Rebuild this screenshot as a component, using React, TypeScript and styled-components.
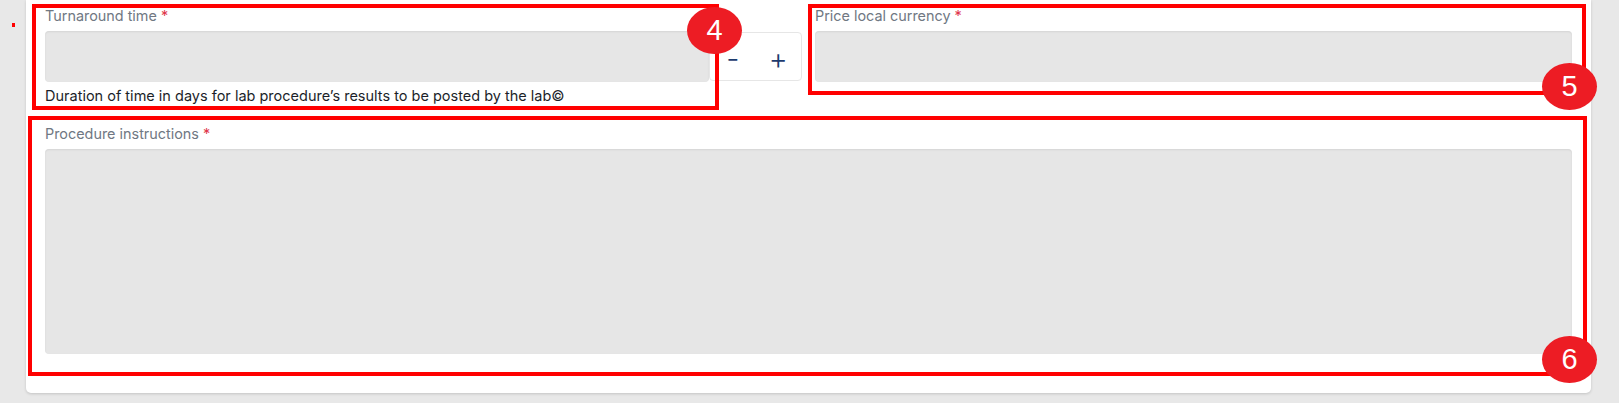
import React from "react"
import styled, { createGlobalStyle } from "styled-components"

const GlobalStyle = createGlobalStyle`
  * {
    box-sizing: border-box;
  }
  body {
    margin: 0;
    background: #e8e8e8;
    font-family: Inter, "Liberation Sans", Arial, sans-serif;
  }
`

interface Rect {
  left: number
  top: number
  width: number
  height: number
}

const annotations: { n: number; box: Rect; badge: { left: number; top: number } }[] = [
  { n: 4, box: { left: 6, top: 4, width: 687, height: 106 }, badge: { left: 661, top: 7 } },
  { n: 5, box: { left: 782, top: 4, width: 778, height: 91 }, badge: { left: 1516, top: 63 } },
  { n: 6, box: { left: 2, top: 116, width: 1559, height: 260 }, badge: { left: 1516, top: 336 } },
]

function App() {
  return (
    <>
      <GlobalStyle />
      <Page>
        <Dot />
        <Card>
          <TopRow>
            <Field>
              <Label>
                Turnaround time <Req>*</Req>
              </Label>
              <InputGroup>
                <Input />
                <Stepper>
                  <StepButton>-</StepButton>
                  <StepButton>+</StepButton>
                </Stepper>
              </InputGroup>
              <Helper>Duration of time in days for lab procedure’s results to be posted by the lab©</Helper>
            </Field>
            <Field>
              <Label>
                Price local currency <Req>*</Req>
              </Label>
              <Input />
            </Field>
          </TopRow>
          <Field>
            <Label>
              Procedure instructions <Req>*</Req>
            </Label>
            <TextArea />
          </Field>

          {annotations.map((a) => (
            <React.Fragment key={a.n}>
              <Outline
                style={{ left: a.box.left, top: a.box.top, width: a.box.width, height: a.box.height }}
              />
              <Badge style={{ left: a.badge.left, top: a.badge.top }}>{a.n}</Badge>
            </React.Fragment>
          ))}
        </Card>
      </Page>
    </>
  )
}

const Page = styled.div`
  display: flex;
  align-items: flex-start;
  padding: 0 28px 10px 12px;
`
const Dot = styled.div`
  width: 3px;
  height: 4px;
  margin-top: 23px;
  margin-right: 11px;
  background: #ff0000;
  flex-shrink: 0;
`
const Card = styled.div`
  position: relative;
  flex: 1;
  background: #ffffff;
  border-radius: 0 0 5px 5px;
  box-shadow: 0 1px 3px rgba(0, 0, 0, 0.16);
  padding: 7px 19px 39px 19px;
`
const TopRow = styled.div`
  display: grid;
  grid-template-columns: 1fr 1fr;
  align-items: start;
  column-gap: 13px;
  margin-bottom: 21px;
`
const Field = styled.div`
  display: flex;
  flex-direction: column;
`
const Label = styled.div`
  font-size: 14.4px;
  line-height: 17px;
  color: #707883;
  margin-bottom: 7px;
`
const Req = styled.span`
  color: #e0364c;
`
const InputGroup = styled.div`
  display: flex;
  align-items: center;
`
const Input = styled.div`
  flex: 1 1 auto;
  height: 51px;
  background: #e6e6e6;
  border-radius: 4px;
  box-shadow: inset 0 1px 2px rgba(0, 0, 0, 0.08);
`
const Stepper = styled.div`
  display: flex;
  width: 93px;
  height: 49px;
  border: 1px solid #e6e6e6;
  border-radius: 4px;
  background: #ffffff;
`
const StepButton = styled.div`
  flex: 1;
  display: flex;
  align-items: center;
  justify-content: center;
  font-size: 29px;
  font-weight: 300;
  line-height: 1;
  color: #1d3b6e;
  padding-top: 3px;
`
const Helper = styled.div`
  margin-top: 5px;
  font-size: 14.5px;
  line-height: 17px;
  color: #1c1f2a;
`
const TextArea = styled.div`
  height: 205px;
  background: #e6e6e6;
  border-radius: 4px;
  box-shadow: inset 0 1px 2px rgba(0, 0, 0, 0.08);
`
const Outline = styled.div`
  position: absolute;
  border: 4px solid #ff0000;
  pointer-events: none;
`
const Badge = styled.div`
  position: absolute;
  width: 55px;
  height: 47px;
  border-radius: 50%;
  background: #ed1c24;
  color: #ffffff;
  font-family: "Liberation Sans", Arial, sans-serif;
  font-size: 29px;
  display: flex;
  align-items: center;
  justify-content: center;
`

export default App
